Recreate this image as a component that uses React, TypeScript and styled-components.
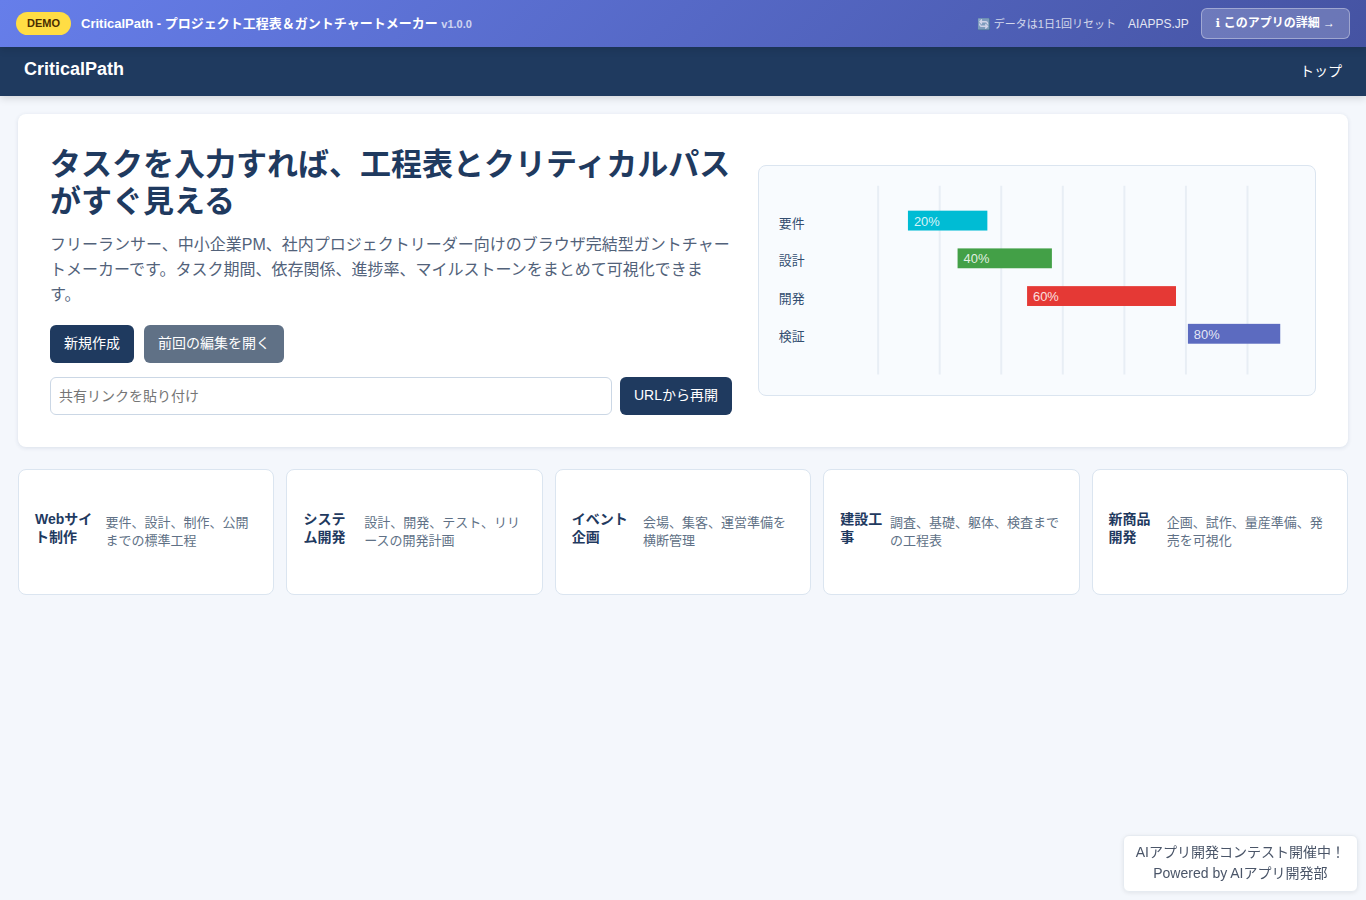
import React from "react";
import styled, { createGlobalStyle } from "styled-components";

const GlobalStyle = createGlobalStyle`
  *, *::before, *::after { box-sizing: border-box; }
  body {
    margin: 0;
    background: #f4f7fc;
    color: #1f3a5f;
    font-family: "Liberation Sans", "Noto Sans CJK JP", sans-serif;
    font-size: 14px;
    line-height: 21px;
  }
  button, input { font: inherit; }
  a { color: inherit; text-decoration: none; }
`;

const DemoBar = styled.div`
  position: relative;
  z-index: 1;
  display: flex;
  align-items: center;
  justify-content: space-between;
  gap: 12px;
  padding: 8px 16px;
  background: linear-gradient(135deg, #667eea 0%, #4553a2 100%);
  color: #fff;
  box-shadow: 0 2px 8px rgba(0, 0, 0, 0.15);
`;

const BarGroup = styled.div<{ $gap: number }>`
  display: flex;
  align-items: center;
  gap: ${(p) => p.$gap}px;
`;

const DemoPill = styled.span`
  padding: 4px 11px;
  border-radius: 12px;
  background: #ffdd44;
  color: #4a2c00;
  font-size: 11px;
  font-weight: 700;
  line-height: 15px;
`;

const BarTitle = styled.span`
  font-size: 13px;
  font-weight: 700;
  line-height: 18px;
`;

const Version = styled.small`
  font-size: 11px;
  opacity: 0.7;
`;

const ResetNote = styled.span`
  font-size: 11px;
  line-height: 16px;
  opacity: 0.75;
`;

const SiteLink = styled.a`
  font-size: 12px;
  line-height: 18px;
  opacity: 0.85;
`;

const DetailLink = styled.a`
  padding: 6px 14px;
  border: 1px solid rgba(255, 255, 255, 0.35);
  border-radius: 6px;
  background: rgba(255, 255, 255, 0.2);
  font-size: 12px;
  font-weight: 700;
  line-height: 17px;
`;

const InfoGlyph = styled.span`
  font-family: "DejaVu Sans", sans-serif;
`;

const Header = styled.header`
  display: flex;
  align-items: center;
  justify-content: space-between;
  padding: 12px 24px;
  background: #1f3a5f;
  color: #fff;
  box-shadow: 0 2px 8px rgba(0, 0, 0, 0.15);
`;

const Brand = styled.a`
  padding-bottom: 4px;
  font-size: 18px;
  font-weight: 700;
  line-height: 21px;
`;

const Main = styled.main`
  display: grid;
  gap: 22px;
  padding: 18px;
`;

const Hero = styled.section`
  display: grid;
  grid-template-columns: 11fr 9fr;
  align-items: center;
  gap: 26px;
  padding: 32px;
  border-radius: 8px;
  background: #fff;
  box-shadow: 0 1px 4px rgba(31, 58, 95, 0.12);
`;

const Title = styled.h1`
  margin: 0 0 12px;
  font-size: 31px;
  line-height: 37px;
`;

const Lead = styled.p`
  margin: 0 0 18px;
  color: #52627a;
  font-size: 16px;
  line-height: 25px;
`;

const Actions = styled.div`
  display: flex;
  gap: 10px;
  margin-bottom: 14px;
`;

const ResumeForm = styled.form`
  display: flex;
  gap: 8px;
`;

const Button = styled.button<{ $muted?: boolean }>`
  height: 38px;
  padding: 0 14px 2px;
  border: 0;
  border-radius: 6px;
  background: ${(p) => (p.$muted ? "#607186" : "#1f3a5f")};
  color: #fff;
  white-space: nowrap;
  cursor: pointer;
`;

const UrlInput = styled.input`
  flex: 1;
  min-width: 0;
  height: 38px;
  padding: 0 8px;
  border: 1px solid #cbd7e5;
  border-radius: 6px;
  background: #fff;
  &::placeholder { color: #757575; }
`;

const Preview = styled.div`
  overflow: hidden;
  border: 1px solid #dbe5f0;
  border-radius: 8px;
  background: #f8fbfe;
`;

const Chart = styled.svg`
  display: block;
  width: 100%;
  font-size: 13px;
`;

const Templates = styled.section`
  display: grid;
  grid-template-columns: repeat(5, 1fr);
  gap: 12px;
`;

const TemplateCard = styled.button`
  display: flex;
  align-items: center;
  justify-content: center;
  gap: 6px;
  min-height: 126px;
  padding: 16px;
  border: 1px solid #dbe5f0;
  border-radius: 8px;
  background: #fff;
  color: #1f3a5f;
  line-height: 18px;
  text-align: left;
  cursor: pointer;
`;

const TemplateName = styled.strong`
  margin-bottom: 8px;
`;

const TemplateText = styled.span`
  color: #607186;
  font-size: 13px;
`;

const Credit = styled.aside`
  position: fixed;
  right: 8px;
  bottom: 8px;
  padding: 6px 12px 7px;
  border: 1px solid #e6ebf1;
  border-radius: 6px;
  background: #fff;
  color: #4a5568;
  text-align: center;
  box-shadow: 0 1px 4px rgba(0, 0, 0, 0.08);
`;

const CreditLine = styled.a`
  display: block;
`;

const gridLines = [120, 182, 244, 306, 368, 430, 492];

const bars = [
  { label: "要件", x: 150, width: 80, progress: 20, color: "#00bcd4" },
  { label: "設計", x: 200, width: 95, progress: 40, color: "#43a047" },
  { label: "開発", x: 270, width: 150, progress: 60, color: "#e53935" },
  { label: "検証", x: 432, width: 93, progress: 80, color: "#5c6bc0" },
];

const templates = [
  { name: "Webサイト制作", text: "要件、設計、制作、公開までの標準工程" },
  { name: "システム開発", text: "設計、開発、テスト、リリースの開発計画" },
  { name: "イベント企画", text: "会場、集客、運営準備を横断管理" },
  { name: "建設工事", text: "調査、基礎、躯体、検査までの工程表" },
  { name: "新商品開発", text: "企画、試作、量産準備、発売を可視化" },
];

function GanttPreview() {
  return (
    <Preview>
      <Chart viewBox="0 0 560 230" role="img" aria-label="ガントチャート">
        {gridLines.map((x) => (
          <line key={x} x1={x} y1={20} x2={x} y2={210} stroke="#e8eef5" strokeWidth={2} />
        ))}
        {bars.map((bar, row) => {
          const y = 45 + row * 38;
          return (
            <g key={bar.label}>
              <text x={20} y={y + 17} fill="#334e70">{bar.label}</text>
              <rect x={bar.x} y={y} width={bar.width} height={20} fill={bar.color} />
              <text x={bar.x + 6} y={y + 15} fill="#fff" fillOpacity={0.85}>
                {bar.progress}%
              </text>
            </g>
          );
        })}
      </Chart>
    </Preview>
  );
}

export default function App() {
  return (
    <>
      <GlobalStyle />
      <DemoBar>
        <BarGroup $gap={10}>
          <DemoPill>DEMO</DemoPill>
          <BarTitle>
            CriticalPath - プロジェクト工程表＆ガントチャートメーカー <Version>v1.0.0</Version>
          </BarTitle>
        </BarGroup>
        <BarGroup $gap={12}>
          <ResetNote>🔄 データは1日1回リセット</ResetNote>
          <SiteLink href="#site">AIAPPS.JP</SiteLink>
          <DetailLink href="#detail"><InfoGlyph>ℹ</InfoGlyph> このアプリの詳細 →</DetailLink>
        </BarGroup>
      </DemoBar>
      <Header>
        <Brand href="#home">CriticalPath</Brand>
        <nav>
          <a href="#top">トップ</a>
        </nav>
      </Header>
      <Main>
        <Hero>
          <div>
            <Title>タスクを入力すれば、工程表とクリティカルパスがすぐ見える</Title>
            <Lead>
              フリーランサー、中小企業PM、社内プロジェクトリーダー向けのブラウザ完結型ガントチャートメーカーです。タスク期間、依存関係、進捗率、マイルストーンをまとめて可視化できます。
            </Lead>
            <Actions>
              <Button type="button">新規作成</Button>
              <Button type="button" $muted>前回の編集を開く</Button>
            </Actions>
            <ResumeForm onSubmit={(e) => e.preventDefault()}>
              <UrlInput type="text" aria-label="共有リンク" placeholder="共有リンクを貼り付け" />
              <Button type="submit">URLから再開</Button>
            </ResumeForm>
          </div>
          <GanttPreview />
        </Hero>
        <Templates>
          {templates.map((t) => (
            <TemplateCard type="button" key={t.name}>
              <TemplateName>{t.name}</TemplateName>
              <TemplateText>{t.text}</TemplateText>
            </TemplateCard>
          ))}
        </Templates>
      </Main>
      <Credit>
        <CreditLine href="#contest">AIアプリ開発コンテスト開催中！</CreditLine>
        <CreditLine href="#powered">Powered by AIアプリ開発部</CreditLine>
      </Credit>
    </>
  );
}
